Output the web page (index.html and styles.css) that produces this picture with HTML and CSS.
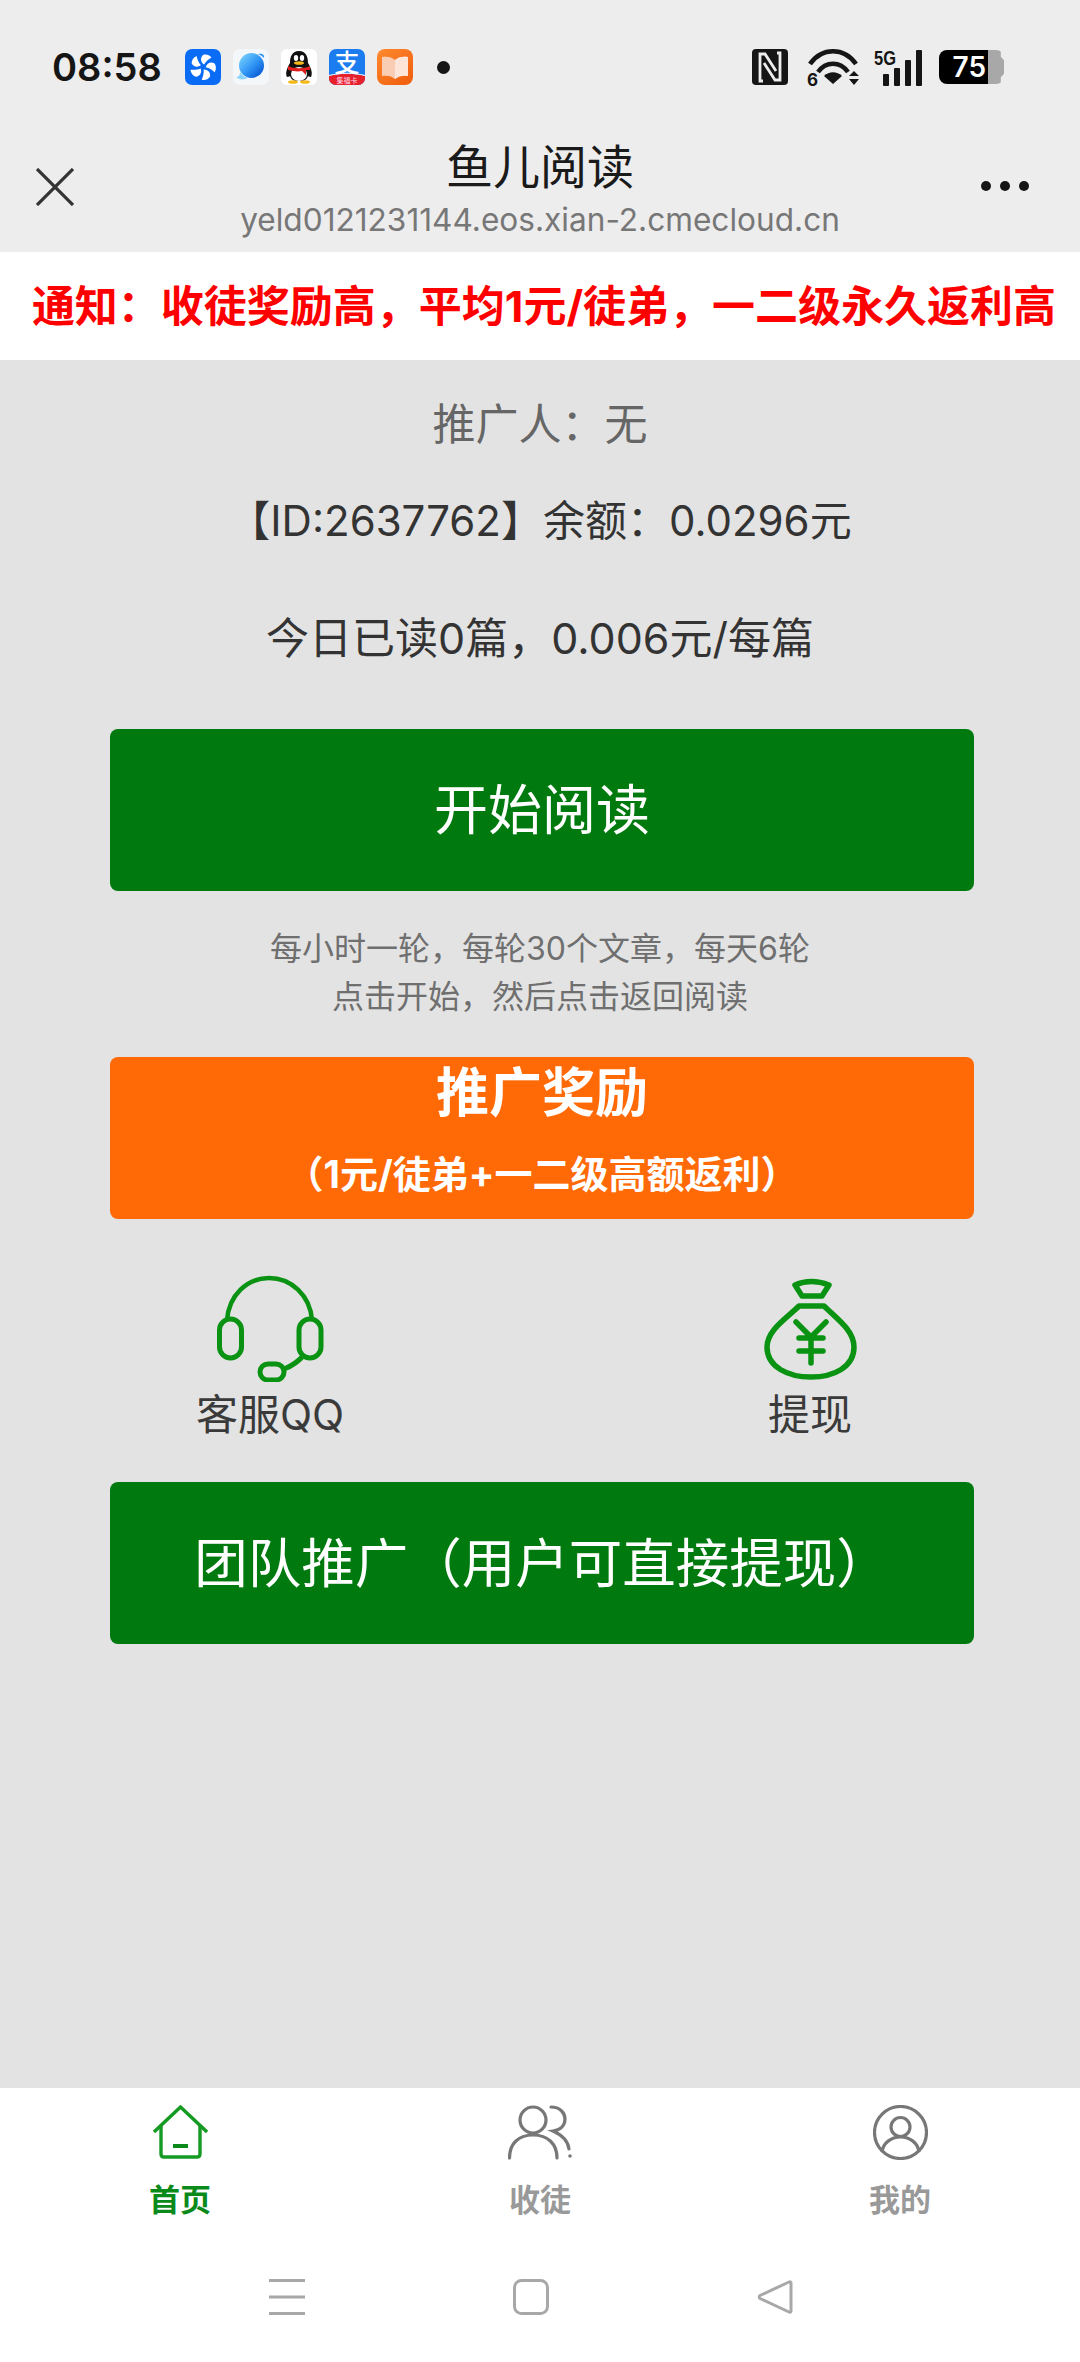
FILE: index.html
```html
<!DOCTYPE html>
<html lang="zh-CN">
<head>
  <meta charset="UTF-8" />
  <meta name="viewport" content="width=device-width, initial-scale=1.0"/>
  <title>鱼儿阅读</title>
  <link rel="stylesheet" href="styles.css">
</head>
<body>
  <header class="top">
    <div class="status">
      <span class="time">08:58</span>
      <div class="apps">
        <svg class="app" viewBox="0 0 36 36">
          <rect width="36" height="36" rx="7" fill="#0a6cf5"/>
          <g fill="#fff">
            <path d="M19 15.500 C15.500 13 15 9 18 6 C21 5 24.500 6 26.500 8.500 C24 10 21 12 19 15.500Z"/>
            <path d="M19 15.500 C15.500 13 15 9 18 6 C21 5 24.500 6 26.500 8.500 C24 10 21 12 19 15.500Z" transform="rotate(72 18 18)"/>
            <path d="M19 15.500 C15.500 13 15 9 18 6 C21 5 24.500 6 26.500 8.500 C24 10 21 12 19 15.500Z" transform="rotate(144 18 18)"/>
            <path d="M19 15.500 C15.500 13 15 9 18 6 C21 5 24.500 6 26.500 8.500 C24 10 21 12 19 15.500Z" transform="rotate(216 18 18)"/>
            <path d="M19 15.500 C15.500 13 15 9 18 6 C21 5 24.500 6 26.500 8.500 C24 10 21 12 19 15.500Z" transform="rotate(288 18 18)"/>
          </g>
        </svg>
        <svg class="app" viewBox="0 0 36 36">
          <defs>
            <linearGradient id="planet" x1="0.100" y1="0.200" x2="0.800" y2="0.900">
              <stop offset="0" stop-color="#6cc8fc"/>
              <stop offset="0.550" stop-color="#2f93f4"/>
              <stop offset="1" stop-color="#0c5ed6"/>
            </linearGradient>
          </defs>
          <rect width="36" height="36" rx="7" fill="#f4f7fa"/>
          <circle cx="18.500" cy="16.500" r="12.500" fill="url(#planet)"/>
          <path d="M25 5 C28 4 32 5 31 9 C30 7.500 27 6 25 5Z" fill="#2f93f4"/>
          <path d="M3 28 C6 28 7 26 7 23 C9 26 11 28 15 29 C11 31 6 31 3 28Z" fill="#8ad3fb"/>
        </svg>
        <svg class="app" viewBox="0 0 36 36">
          <rect width="36" height="36" rx="6" fill="#fff"/>
          <path d="M18 2 C25 2 27 8 27 14 C30 19 32 24 30 28 C28 28 27 27 27 27 C26 30 24 32 18 32 C12 32 10 30 9 27 C9 27 8 28 6 28 C4 24 6 19 9 14 C9 8 11 2 18 2Z" fill="#111"/>
          <ellipse cx="18" cy="25" rx="8" ry="7" fill="#fff"/>
          <ellipse cx="15" cy="9" rx="2.200" ry="3" fill="#fff"/>
          <ellipse cx="21" cy="9" rx="2.200" ry="3" fill="#fff"/>
          <ellipse cx="18" cy="14" rx="5" ry="1.800" fill="#f5b91c"/>
          <path d="M7 17 C13 20 23 20 29 17 L29 21 L25 21 L25 26 L21 22 C16 23 12 22 7 21Z" fill="#e01f1f"/>
          <ellipse cx="12" cy="33" rx="5" ry="1.800" fill="#f5b91c"/>
          <ellipse cx="24" cy="33" rx="5" ry="1.800" fill="#f5b91c"/>
        </svg>
        <svg class="app" viewBox="0 0 36 36">
          <rect width="36" height="36" rx="7" fill="#1b7cf0"/>
          <path d="M0 27 C12 24 24 24 36 27 V29 C36 33 33 36 29 36 H7 C3 36 0 33 0 29Z" fill="#e8202c"/>
          <path d="M0 26.500 C12 23.500 24 23.500 36 26.500" fill="none" stroke="#fff" stroke-width="1"/>
          <text class="app-zhi" x="18" y="23">支</text>
          <text class="app-tag" x="18" y="34">集福卡</text>
        </svg>
        <svg class="app" viewBox="0 0 36 36">
          <defs>
            <linearGradient id="bookbg" x1="0" y1="0" x2="0.800" y2="1">
              <stop offset="0" stop-color="#ff8a2e"/>
              <stop offset="1" stop-color="#f0600f"/>
            </linearGradient>
          </defs>
          <rect width="36" height="36" rx="8" fill="url(#bookbg)"/>
          <path d="M5 8 C10 7 15 8 18 11 C21 8 26 7 31 8 V27 C26 26 21 27 18 30 C15 27 10 26 5 27Z" fill="#f9cdb4"/>
          <path d="M18 11 C21 8 26 7 31 8 V27 C26 26 21 27 18 30Z" fill="#fde6d9"/>
        </svg>
      </div>
      <span class="dot"></span>
      <div class="sys">
        <svg class="nfc" viewBox="0 0 36 36">
          <rect width="36" height="36" rx="4" fill="#151515"/>
          <path d="M11 32 H8 V5 H13 L24 22 M25 4 H28 V31 H23 L12 14" fill="none" stroke="#ededed" stroke-width="2.800"/>
        </svg>
        <svg class="wifi" viewBox="0 0 52 37">
          <path d="M3 15 C15 -2 37 -2 49 15" fill="none" stroke="#151515" stroke-width="4.600"/>
          <path d="M11 23 C19 12 33 12 41 23" fill="none" stroke="#151515" stroke-width="4.600"/>
          <path d="M17 27 C22 22 30 22 35 27 L26 35Z" fill="#151515"/>
          <path d="M47 22 L52 27 H42Z M42 30 H52 L47 36Z" fill="#151515"/>
          <text class="wifi-six" x="0" y="37">6</text>
        </svg>
        <svg class="signal" viewBox="0 0 48 37">
          <text class="signal-five" x="0" y="16" textLength="22" lengthAdjust="spacingAndGlyphs">5G</text>
          <rect x="9" y="25" width="6" height="12" rx="1" fill="#151515"/>
          <rect x="20" y="19" width="6" height="18" rx="1" fill="#151515"/>
          <rect x="31" y="11" width="6" height="26" rx="1" fill="#151515"/>
          <rect x="42" y="1" width="6" height="36" rx="1" fill="#151515"/>
        </svg>
        <div class="battery">
          <span class="battery-fill">75</span>
          <span class="battery-rest"></span>
        </div>
      </div>
    </div>
    <div class="nav">
      <svg class="close" viewBox="0 0 38 38">
        <path d="M1 1 L37 37 M37 1 L1 37" stroke="#333" stroke-width="3.200" fill="none"/>
      </svg>
      <div class="nav-title">
        <h1>鱼儿阅读</h1>
        <p>yeld0121231144.eos.xian-2.cmecloud.cn</p>
      </div>
      <div class="more"><i></i><i></i><i></i></div>
    </div>
  </header>

  <div class="notice">通知：收徒奖励高，平均1元/徒弟，一二级永久返利高</div>

  <main>
    <p class="line referrer">推广人：无</p>
    <p class="line balance">【ID:2637762】余额：0.0296元</p>
    <p class="line today">今日已读0篇，0.006元/每篇</p>
    <a class="btn btn-green btn-start">开始阅读</a>
    <p class="hint">每小时一轮，每轮30个文章，每天6轮<br>点击开始，然后点击返回阅读</p>
    <a class="btn btn-orange">
      <strong>推广奖励</strong>
      <small>（1元/徒弟+一二级高额返利）</small>
    </a>
    <div class="shortcuts">
      <div class="shortcut">
        <svg class="shortcut-icon" viewBox="0 0 107 107">
          <g fill="none" stroke="#0a9212" stroke-width="5">
            <path d="M10 45 C12 20 30 3 52 3 C74 3 93 20 95 45" stroke-width="4.500"/>
            <rect x="2.500" y="44" width="22" height="39" rx="11"/>
            <rect x="82" y="44" width="22" height="39" rx="11"/>
            <rect x="43" y="89" width="24" height="16" rx="8"/>
            <path d="M67 94 C75 91 81 87 87 80"/>
          </g>
        </svg>
        <span>客服QQ</span>
      </div>
      <div class="shortcut">
        <svg class="shortcut-icon" viewBox="0 0 93 107">
          <g fill="none" stroke="#0a9212" stroke-width="5.500" stroke-linejoin="round">
            <path d="M31 10 Q47 3 65 10 L58 21 H38Z"/>
            <path d="M35 31 H60 C72 43 90 55 90 72 C90 92 70 102 47 102 C24 102 3 92 3 72 C3 55 23 43 35 31Z"/>
            <path d="M32 47 L47 62 L62 47 M35 63 H59 M35 76 H59 M47 62 V88" stroke-linecap="round"/>
          </g>
        </svg>
        <span>提现</span>
      </div>
    </div>
    <a class="btn btn-green btn-team">团队推广（用户可直接提现）</a>
  </main>

  <footer>
    <nav class="tabs">
      <a class="tab tab-on">
        <svg viewBox="0 0 55 55">
          <path d="M1 27 L27.500 2 L54 27" fill="none" stroke="#159a24" stroke-width="3.400"/>
          <path d="M8 20 V49 Q8 52 11 52 H44 Q47 52 47 49 V20" fill="none" stroke="#159a24" stroke-width="3.400"/>
          <rect x="20" y="39" width="15" height="4" fill="#0a8a1a"/>
        </svg>
        <span>首页</span>
      </a>
      <a class="tab">
        <svg viewBox="0 0 64 55">
          <g fill="none" stroke="#777" stroke-width="3.200" stroke-linecap="round">
            <circle cx="25" cy="15" r="13"/>
            <path d="M1.500 53 C1.500 39 10 30 25 30 C40 30 49 39 49 53"/>
            <path d="M43 2 C52 2 57 8 57 14 C57 20 53 25 45 26 C54 30 60 36 61 44"/>
          </g>
          <circle cx="62" cy="51" r="1.800" fill="#777"/>
        </svg>
        <span>收徒</span>
      </a>
      <a class="tab">
        <svg viewBox="0 0 55 55">
          <g fill="none" stroke="#777" stroke-width="3.200">
            <circle cx="27.500" cy="27.500" r="26"/>
            <circle cx="27.500" cy="22" r="9.500"/>
            <path d="M9 47 C10 38 18 32 27.500 32 C37 32 45 38 46 47"/>
          </g>
        </svg>
        <span>我的</span>
      </a>
    </nav>
    <div class="sysnav">
      <svg viewBox="0 0 36 36">
        <path d="M0 1.500 H36 M0 18 H36 M0 34.500 H36" stroke="#a8a8a8" stroke-width="3" fill="none"/>
      </svg>
      <svg viewBox="0 0 36 36">
        <rect x="1.500" y="1.500" width="33" height="33" rx="7" stroke="#a8a8a8" stroke-width="3" fill="none"/>
      </svg>
      <svg viewBox="0 0 36 36">
        <path d="M32 3 C33 2.500 34 3 34 4 V32 C34 33 33 33.500 32 33 L3 19.500 C2 19 2 17 3 16.500Z" stroke="#a8a8a8" stroke-width="3" fill="none" stroke-linejoin="round"/>
      </svg>
    </div>
  </footer>
</body>
</html>
```

FILE: styles.css
```css
* {
  box-sizing: border-box;
}
body {
  margin: 0;
  height: 2362px;
  display: flex;
  flex-direction: column;
  font-family: Inter, "Noto Sans CJK SC", sans-serif;
  background-color: #e3e3e3;
  color: #333;
}
p, h1 {
  margin: 0;
}

/* top bars */
.top {
  background-color: #ededed;
  height: 252px;
}
.status {
  height: 134px;
  display: flex;
  align-items: center;
  padding-left: 52px;
  padding-right: 76px;
}
.time {
  width: 133px;
  font-size: 38px;
  font-weight: 600;
  color: #151515;
}
.apps {
  display: flex;
  gap: 12px;
}
.app {
  width: 36px;
  height: 36px;
  display: block;
}
.app-zhi {
  font-size: 25px;
  font-weight: 500;
  fill: #fff;
  text-anchor: middle;
}
.app-tag {
  font-size: 7px;
  fill: #fde;
  text-anchor: middle;
}
.dot {
  width: 13px;
  height: 13px;
  margin-left: 24px;
  border-radius: 50%;
  background-color: #151515;
}
.sys {
  margin-left: auto;
  display: flex;
  align-items: center;
}
.nfc {
  width: 36px;
  height: 36px;
}
.wifi {
  width: 52px;
  height: 37px;
  margin-left: 19px;
  overflow: visible;
}
.wifi-six {
  font-size: 17px;
  font-weight: 700;
  fill: #151515;
}
.signal {
  width: 48px;
  height: 37px;
  margin-left: 15px;
  overflow: visible;
}
.signal-five {
  font-family: "Liberation Sans", sans-serif;
  font-size: 20px;
  font-weight: 700;
  fill: #151515;
}
.battery {
  display: flex;
  width: 65px;
  height: 34px;
  margin-left: 17px;
}
.battery-fill {
  width: 49px;
  background-color: #000;
  border-radius: 8px 0 0 8px;
  color: #fff;
  font-size: 28px;
  font-weight: 600;
  line-height: 34px;
  text-align: right;
  padding-right: 2px;
}
.battery-rest {
  width: 16px;
  background-color: #a8a8a8;
  border-radius: 0 8px 8px 0;
  clip-path: polygon(0 0, 80% 0, 80% 20%, 100% 30%, 100% 70%, 80% 80%, 80% 100%, 0 100%);
}

.nav {
  height: 118px;
  display: flex;
  align-items: flex-start;
  padding-left: 36px;
  padding-right: 51px;
}
.close {
  width: 38px;
  height: 38px;
  margin-top: 34px;
}
.nav-title {
  flex: 1;
  text-align: center;
  padding-left: 25px;
}
.nav-title h1 {
  font-size: 47px;
  font-weight: 400;
  line-height: 60px;
  margin-top: 3px;
  color: #1a1a1a;
}
.nav-title p {
  font-size: 31.600px;
  line-height: 44px;
  margin-top: 1px;
  color: #777;
  white-space: nowrap;
}
.more {
  display: flex;
  gap: 9px;
  margin-top: 47px;
}
.more i {
  width: 10px;
  height: 10px;
  border-radius: 50%;
  background-color: #151515;
}

.notice {
  height: 108px;
  line-height: 108px;
  padding-left: 8px;
  background-color: #fff;
  color: #f00;
  font-size: 43px;
  font-weight: 700;
  text-align: center;
  white-space: nowrap;
}

/* page body */
main {
  flex: 1;
  padding-top: 34px;
}
.line {
  font-size: 42px;
  line-height: 60px;
  text-align: center;
}
.referrer {
  font-size: 43px;
  color: #666;
}
.balance {
  margin-top: 37px;
}
.today {
  font-size: 43px;
  margin-top: 57px;
}
.btn {
  display: flex;
  flex-direction: column;
  align-items: center;
  justify-content: center;
  height: 162px;
  margin: 0 106px 0 110px;
  padding-bottom: 8px;
  border-radius: 8px;
  color: #fff;
  font-size: 54px;
}
.btn-green {
  background-color: #007a0f;
}
.btn-start {
  margin-top: 61px;
}
.btn-team {
  font-size: 53.500px;
}
.btn-orange {
  margin-top: 36px;
  padding-bottom: 0;
  background-color: #ff6a07;
  justify-content: flex-start;
}
.btn-orange strong {
  font-size: 53px;
  line-height: 72px;
}
.btn-orange small {
  font-size: 38px;
  font-weight: 700;
  line-height: 50px;
  margin-top: 20px;
}
.hint {
  margin-top: 34px;
  font-size: 32px;
  line-height: 48px;
  text-align: center;
  color: #6f6f6f;
}
.shortcuts {
  display: grid;
  grid-template-columns: 1fr 1fr;
  padding-top: 56px;
  padding-bottom: 37px;
}
.shortcut {
  display: flex;
  flex-direction: column;
  align-items: center;
}
.shortcut-icon {
  height: 107px;
  display: block;
}
.shortcut span {
  font-size: 42px;
  line-height: 60px;
  margin-top: 3px;
  color: #3a3a3a;
}

/* bottom */
footer {
  height: 274px;
  background-color: #fff;
}
.tabs {
  display: grid;
  grid-template-columns: 1fr 1fr 1fr;
  padding-top: 17px;
}
.tab {
  display: flex;
  flex-direction: column;
  align-items: center;
  color: #999;
  font-size: 31px;
  font-weight: 700;
}
.tab svg {
  height: 55px;
  display: block;
}
.tab span {
  line-height: 44px;
  margin-top: 18px;
}
.tab-on {
  color: #0a8a1a;
}
.sysnav {
  display: flex;
  justify-content: center;
  gap: 208px;
  margin-top: 57px;
  padding-right: 18px;
}
.sysnav svg {
  width: 36px;
  height: 36px;
  display: block;
}
```
